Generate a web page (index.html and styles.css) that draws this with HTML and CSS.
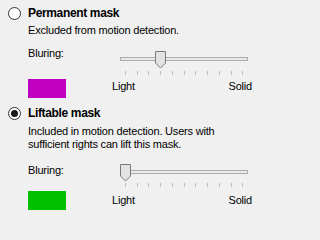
FILE: index.html
```html
<!DOCTYPE html>
<html lang="en">
<head>
<meta charset="utf-8">
<title>Mask options</title>
<link rel="stylesheet" href="styles.css">
</head>
<body>
  <section class="option option--first">
    <div class="option-head">
      <span class="radio"></span>
      <span class="title">Permanent mask</span>
    </div>
    <div class="option-body">
      <p class="desc">Excluded from motion detection.</p>
      <div class="blur-row">
        <span class="blur-label">Bluring:</span>
        <svg class="slider" width="132" height="26" viewBox="0 0 132 26">
          <rect class="track" x="0.5" y="6.5" width="127" height="3"/>
          <g class="ticks">
            <rect x="5" y="20" width="1" height="4"/><rect x="17" y="20" width="1" height="4"/>
            <rect x="28" y="20" width="1" height="4"/><rect x="40" y="20" width="1" height="4"/>
            <rect x="52" y="20" width="1" height="4"/><rect x="64" y="20" width="1" height="4"/>
            <rect x="75" y="20" width="1" height="4"/><rect x="87" y="20" width="1" height="4"/>
            <rect x="99" y="20" width="1" height="4"/><rect x="111" y="20" width="1" height="4"/>
            <rect x="122" y="20" width="1" height="4"/>
          </g>
          <polygon class="thumb" points="35.5,0.5 45.5,0.5 45.5,12 40.5,17 35.5,12"/>
        </svg>
      </div>
      <div class="swatch-row">
        <span class="swatch swatch--magenta"></span>
        <div class="scale"><span>Light</span><span>Solid</span></div>
      </div>
    </div>
  </section>

  <section class="option option--second">
    <div class="option-head">
      <span class="radio radio--checked"></span>
      <span class="title">Liftable mask</span>
    </div>
    <div class="option-body">
      <p class="desc desc--two">Included in motion detection. Users with sufficient rights can lift this mask.</p>
      <div class="blur-row blur-row--low">
        <span class="blur-label">Bluring:</span>
        <svg class="slider" width="132" height="26" viewBox="0 0 132 26">
          <rect class="track" x="0.5" y="6.5" width="127" height="3"/>
          <g class="ticks">
            <rect x="5" y="19" width="1" height="4"/><rect x="17" y="19" width="1" height="4"/>
            <rect x="28" y="19" width="1" height="4"/><rect x="40" y="19" width="1" height="4"/>
            <rect x="52" y="19" width="1" height="4"/><rect x="64" y="19" width="1" height="4"/>
            <rect x="75" y="19" width="1" height="4"/><rect x="87" y="19" width="1" height="4"/>
            <rect x="99" y="19" width="1" height="4"/><rect x="111" y="19" width="1" height="4"/>
            <rect x="122" y="19" width="1" height="4"/>
          </g>
          <polygon class="thumb" points="0.5,0.5 10.5,0.5 10.5,12 5.5,17 0.5,12"/>
        </svg>
      </div>
      <div class="swatch-row swatch-row--low">
        <span class="swatch swatch--green"></span>
        <div class="scale"><span>Light</span><span>Solid</span></div>
      </div>
    </div>
  </section>
</body>
</html>
```

FILE: styles.css
```css
html, body {
  margin: 0;
  background: #f0f0f0;
}

body {
  width: 264px;
  height: 218px;
  overflow: hidden;
  padding-top: 6px;
  box-sizing: border-box;
  font-family: "Liberation Sans", Arial, sans-serif;
  font-size: 11px;
  color: #000;
}

.option--second {
  margin-top: 8px;
}

.option-head {
  display: flex;
  align-items: center;
  gap: 7px;
  padding-left: 8px;
  height: 15px;
}

.radio {
  width: 13px;
  height: 13px;
  box-sizing: border-box;
  border: 1px solid #333;
  border-radius: 50%;
  background: #fff;
  display: grid;
  place-items: center;
}

.radio--checked::after {
  content: "";
  width: 7px;
  height: 7px;
  border-radius: 50%;
  background: #1a1a1a;
}

.title {
  font-weight: bold;
  font-size: 12px;
  line-height: 15px;
  letter-spacing: -0.35px;
}

.option-body {
  padding-left: 28px;
}

.desc {
  margin: 3px 0 0;
  line-height: 13px;
  letter-spacing: -0.2px;
  width: 230px;
}

.desc--two {
  margin-top: 4px;
  line-height: 12.5px;
}

.blur-row {
  display: flex;
  align-items: flex-start;
  margin-top: 10px;
}

.blur-label {
  width: 92px;
  line-height: 13px;
  letter-spacing: -0.2px;
}

.slider {
  display: block;
  margin-top: 4px;
}

.blur-row--low {
  margin-top: 14px;
}

.blur-row--low .slider {
  margin-top: 0;
}

.track {
  fill: #e7eaea;
  stroke: #adadad;
  stroke-width: 1;
}

.ticks rect {
  fill: #c0c0c0;
}

.thumb {
  fill: #e3e3e3;
  stroke: #7a7a7a;
  stroke-width: 1;
}

.swatch-row {
  display: flex;
  align-items: flex-start;
  margin-top: 2px;
}

.swatch-row--low {
  margin-top: 1px;
}

.swatch {
  width: 38px;
  height: 19px;
}

.swatch--magenta {
  background: #c000c0;
}

.swatch--green {
  background: #00c000;
}

.scale {
  display: flex;
  justify-content: space-between;
  width: 140px;
  margin-left: 46px;
  margin-top: 1px;
  line-height: 13px;
  letter-spacing: -0.2px;
}

.swatch-row--low .scale {
  margin-top: 3px;
}
```
